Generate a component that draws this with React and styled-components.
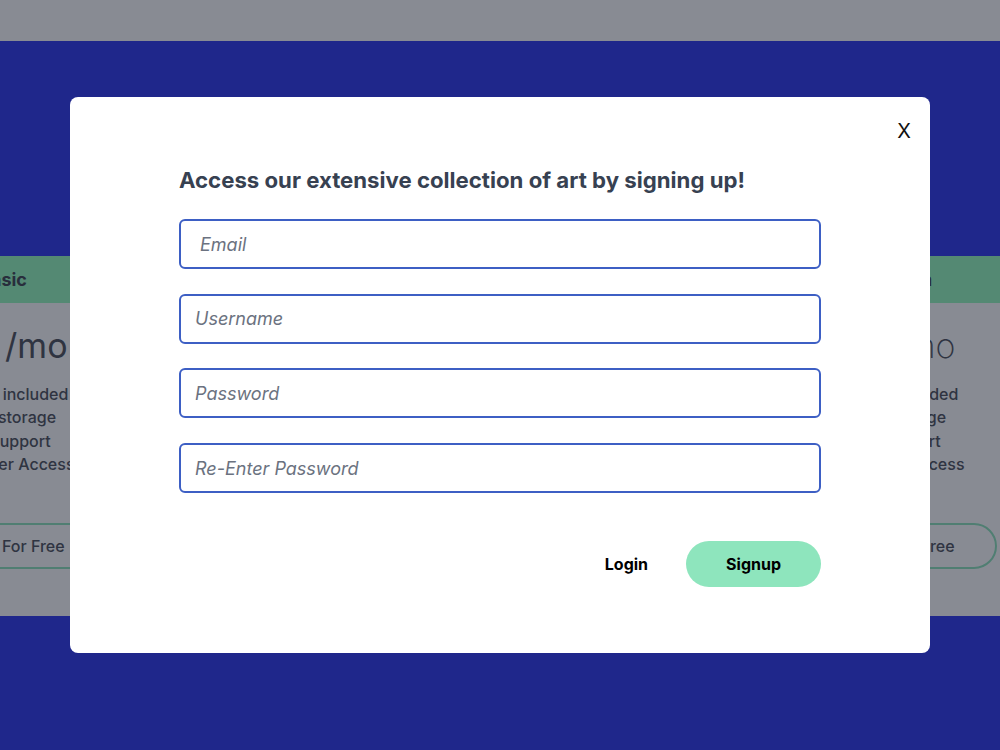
import React from "react";
import styled, { createGlobalStyle } from "styled-components";

const Global = createGlobalStyle`
  * { box-sizing: border-box; }
  html, body { margin: 0; padding: 0; overflow: hidden; }
  body { font-family: Inter, "Noto Sans", "Liberation Sans", sans-serif; background: #ffffff; }
`;

const Page = styled.div`
  width: 1000px;
  height: 750px;
  display: flex;
  flex-direction: column;
  overflow: hidden;
`;

const NavBar = styled.header`
  height: 41px;
  flex: none;
  background: #ffffff;
`;

const Hero = styled.main`
  flex: 1;
  background: #2d36ef;
  padding: 215px 104px 0 0;
  display: flex;
  justify-content: center;
`;

const CardRow = styled.div`
  display: flex;
  gap: 145px;
  justify-content: center;
  align-items: flex-start;
`;

const Card = styled.section`
  width: 300px;
  flex: none;
  background: #ffffff;
  display: flex;
  flex-direction: column;
  color: #4d515b;
`;

const CardHeader = styled.div`
  height: 47px;
  background: #97fabf;
  display: flex;
  align-items: center;
  justify-content: center;
  font-size: 18px;
  font-weight: 700;
  color: #3f4451;
`;

const CardBody = styled.div`
  height: 313px;
  padding: 23px 46px 0;
  display: flex;
  flex-direction: column;
  align-items: stretch;
  text-align: center;
`;

const Price = styled.div`
  font-size: 34px;
  line-height: 40px;
  font-weight: ${(p) => p.$weight};
  color: #4d515b;
`;

const Features = styled.ul`
  list-style: none;
  margin: 17px 0 0;
  padding: 0;
  font-size: 16px;
  line-height: 23.4px;
  font-weight: 500;
`;

const PlanButton = styled.button`
  margin-top: 46px;
  height: 46px;
  border: 2px solid #8ee5bd;
  border-radius: 23px;
  background: transparent;
  font-family: inherit;
  font-size: 16px;
  font-weight: 500;
  color: #4d515b;
`;

const Overlay = styled.div`
  position: fixed;
  inset: 0;
  background: rgba(17, 24, 39, 0.5);
  display: flex;
  align-items: center;
  justify-content: center;
`;

const Modal = styled.div`
  width: 860px;
  height: 556px;
  background: #ffffff;
  border-radius: 8px;
  display: flex;
  flex-direction: column;
`;

const CloseRow = styled.div`
  display: flex;
  justify-content: flex-end;
  padding: 22px 19px 0;
`;

const CloseButton = styled.button`
  border: none;
  background: none;
  padding: 0;
  font-family: Inter, "Liberation Sans", sans-serif;
  font-size: 20px;
  line-height: 24px;
  color: #111111;
  cursor: pointer;
`;

const Form = styled.form`
  padding: 23px 109px 0;
  display: flex;
  flex-direction: column;
`;

const Title = styled.h2`
  margin: 0;
  font-size: 22.2px;
  line-height: 27px;
  font-weight: 700;
  color: #374151;
`;

const Fields = styled.div`
  margin-top: 26px;
  display: flex;
  flex-direction: column;
  gap: 24.7px;
`;

const Field = styled.input`
  height: 50px;
  width: 100%;
  border: 2px solid #3d5fc4;
  border-radius: 6px;
  padding: 0 14px 0 ${(p) => p.$inset}px;
  font-family: Inter, "Liberation Sans", sans-serif;
  font-size: 18px;
  color: #374151;
  outline: none;
  &::placeholder {
    font-style: italic;
    color: #6b7280;
  }
`;

const Actions = styled.div`
  margin-top: 48px;
  display: flex;
  justify-content: flex-end;
  align-items: center;
`;

const ActionButton = styled.button`
  height: 46px;
  padding: 0 ${(p) => (p.$primary ? 40 : 38)}px;
  border: none;
  border-radius: 23px;
  background: ${(p) => (p.$primary ? "#8ee5bd" : "transparent")};
  font-family: Inter, "Liberation Sans", sans-serif;
  font-size: 16px;
  font-weight: 700;
  color: #000000;
  cursor: pointer;
`;

const plans = [
  {
    name: "Basic",
    price: "$10 /mo",
    weight: 400,
    features: ["5 works included", "10 GB storage", "Live support", "Newsletter Access"],
  },
  {
    name: "Standard",
    price: "$20 /mo",
    weight: 400,
    features: ["50 works included", "50 GB storage", "Live support", "Newsletter Access"],
  },
  {
    name: "Premium",
    price: "$10 /mo",
    weight: 200,
    features: ["5 works included", "10 GB storage", "Live support", "Newsletter Access"],
  },
];

export default function App() {
  return (
    <>
      <Global />
      <Page>
        <NavBar />
        <Hero>
          <CardRow>
            {plans.map((plan) => (
              <Card key={plan.name}>
                <CardHeader>{plan.name}</CardHeader>
                <CardBody>
                  <Price $weight={plan.weight}>{plan.price}</Price>
                  <Features>
                    {plan.features.map((f) => (
                      <li key={f}>{f}</li>
                    ))}
                  </Features>
                  <PlanButton type="button">Access For Free</PlanButton>
                </CardBody>
              </Card>
            ))}
          </CardRow>
        </Hero>
      </Page>
      <Overlay>
        <Modal role="dialog" aria-modal="true">
          <CloseRow>
            <CloseButton type="button" aria-label="Close">X</CloseButton>
          </CloseRow>
          <Form onSubmit={(e) => e.preventDefault()}>
            <Title>Access our extensive collection of art by signing up!</Title>
            <Fields>
              <Field type="email" placeholder="Email" $inset={19} />
              <Field type="text" placeholder="Username" $inset={14} />
              <Field type="password" placeholder="Password" $inset={14} />
              <Field type="password" placeholder="Re-Enter Password" $inset={14} />
            </Fields>
            <Actions>
              <ActionButton type="button">Login</ActionButton>
              <ActionButton type="submit" $primary>Signup</ActionButton>
            </Actions>
          </Form>
        </Modal>
      </Overlay>
    </>
  );
}
